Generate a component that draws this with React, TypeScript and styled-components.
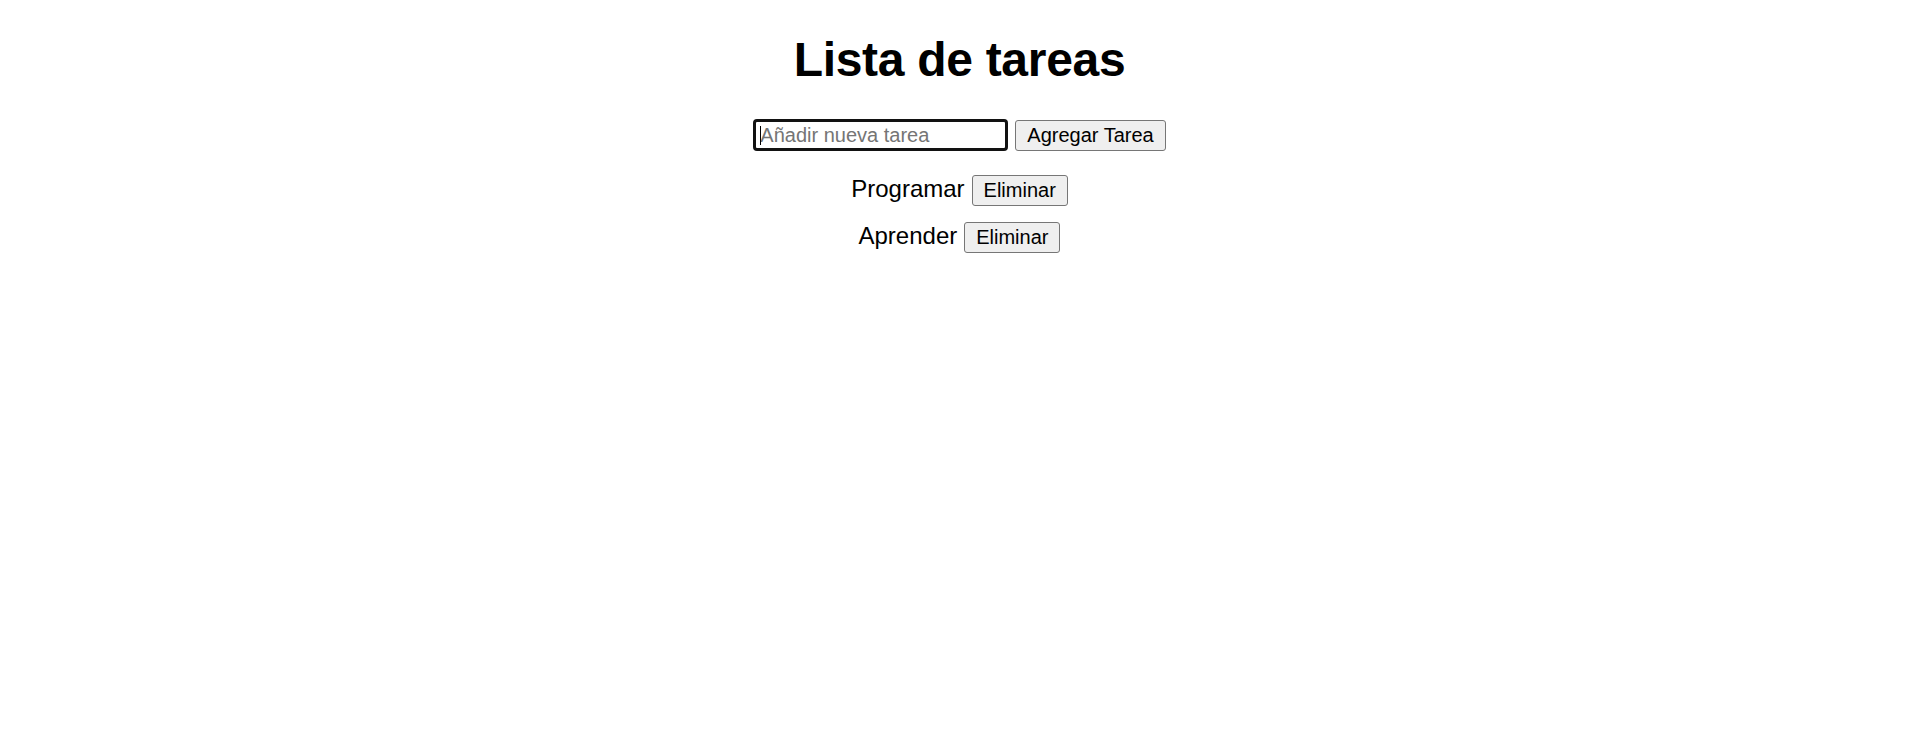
import React from "react";
import styled, { createGlobalStyle } from "styled-components";

const GlobalStyle = createGlobalStyle`
  html, body {
    margin: 0;
    padding: 0;
    background: #ffffff;
  }
  body {
    font-family: "Liberation Sans", Arial, sans-serif;
    color: #000000;
  }
`;

const Page = styled.div`
  display: flex;
  flex-direction: column;
  align-items: center;
  padding-top: 32px;
`;

const Title = styled.h1`
  margin: 0;
  font-size: 48px;
  line-height: 55px;
  font-weight: 700;
  letter-spacing: -0.3px;
`;

const Form = styled.form`
  display: flex;
  align-items: center;
  gap: 7px;
  margin-top: 32px;
  height: 32px;
`;

const InputWrap = styled.span`
  position: relative;
  display: inline-flex;
  &::after {
    content: "";
    position: absolute;
    left: 7px;
    top: 7px;
    width: 1px;
    height: 19px;
    background: #000000;
  }
`;

const TaskInput = styled.input`
  box-sizing: border-box;
  width: 255px;
  height: 32px;
  padding: 0 4px;
  border: 3px solid #121212;
  border-radius: 4px;
  font-family: "Liberation Sans", Arial, sans-serif;
  font-size: 20px;
  color: #000000;
  background: #ffffff;
  outline: none;
  &::placeholder {
    color: #757575;
  }
`;

const Button = styled.button`
  box-sizing: border-box;
  height: 31px;
  padding: 0 11px;
  border: 1px solid #767676;
  border-radius: 3px;
  background: #efefef;
  font-family: "Liberation Sans", Arial, sans-serif;
  font-size: 20px;
  color: #000000;
  cursor: pointer;
`;

const List = styled.ul`
  list-style: none;
  margin: 24px 0 0;
  padding: 0;
  display: flex;
  flex-direction: column;
  align-items: center;
  gap: 16px;
`;

const Item = styled.li`
  display: flex;
  align-items: baseline;
  gap: 7px;
  height: 31px;
`;

const ItemText = styled.span`
  font-size: 24px;
`;

const tasks = ["Programar", "Aprender"];

export default function App() {
  return (
    <>
      <GlobalStyle />
      <Page>
        <Title>Lista de tareas</Title>
        <Form onSubmit={(e) => e.preventDefault()}>
          <InputWrap>
            <TaskInput type="text" placeholder="Añadir nueva tarea" />
          </InputWrap>
          <Button type="submit">Agregar Tarea</Button>
        </Form>
        <List>
          {tasks.map((t) => (
            <Item key={t}>
              <ItemText>{t}</ItemText>
              <Button type="button">Eliminar</Button>
            </Item>
          ))}
        </List>
      </Page>
    </>
  );
}
